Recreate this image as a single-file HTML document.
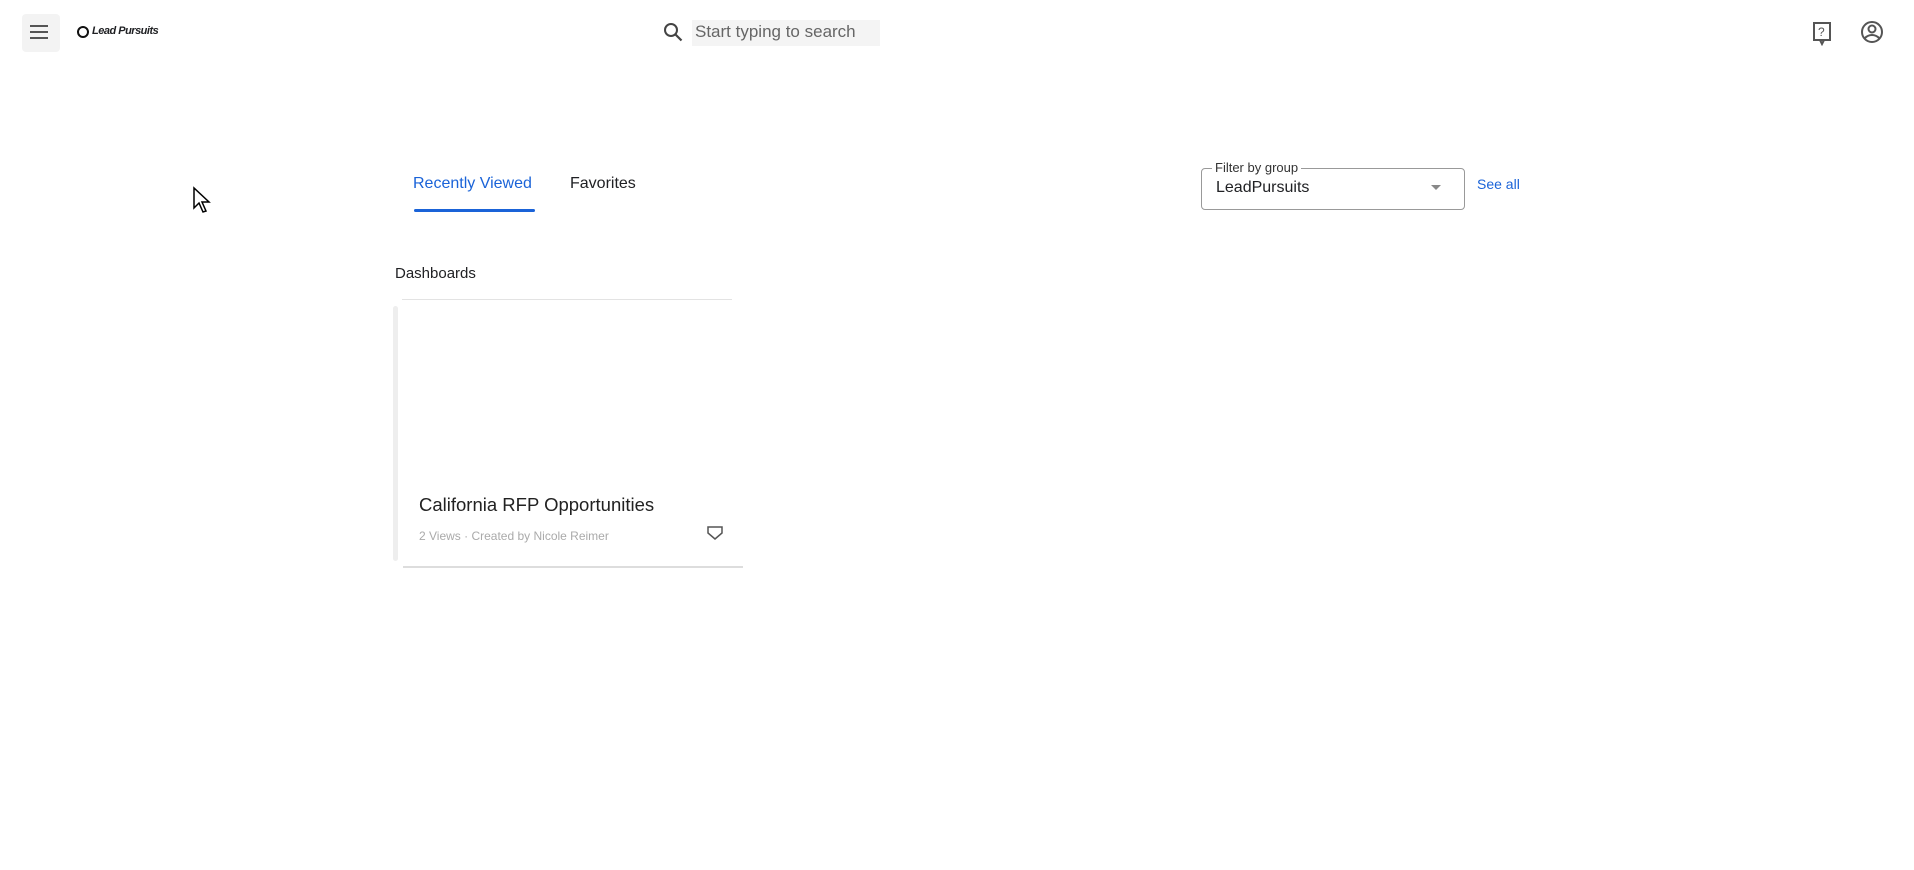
<!DOCTYPE html>
<html><head><meta charset="utf-8"><style>
body{margin:0;width:1914px;height:870px;background:#fff;font-family:"Liberation Sans",sans-serif;position:relative;overflow:hidden;color:#202124}
.a{position:absolute;white-space:nowrap}
</style></head><body>
<div class="a" style="left:22px;top:14px;width:38px;height:38px;background:#f3f3f3;border-radius:4px"></div>
<svg class="a" style="left:28px;top:22px" width="22" height="20"><path d="M2 4h18M2 10h18M2 16h18" stroke="#555" stroke-width="2"/></svg>
<svg class="a" style="left:76px;top:25px" width="14" height="14"><circle cx="7" cy="7" r="5" fill="none" stroke="#111" stroke-width="2"/></svg>
<div class="a" style="left:92px;top:25px;font-size:11px;font-weight:bold;font-style:italic;letter-spacing:-0.5px">Lead Pursuits</div>
<svg class="a" style="left:662px;top:21px" width="22" height="22"><circle cx="9" cy="9" r="6" fill="none" stroke="#444" stroke-width="2"/><path d="M13.5 13.5l6 6" stroke="#444" stroke-width="2.2"/></svg>
<div class="a" style="left:692px;top:20px;width:188px;height:26px;background:#f4f4f4"></div>
<div class="a" style="left:695px;top:22px;font-size:17px;color:#666">Start typing to search</div>
<svg class="a" style="left:1811px;top:20px" width="22" height="26"><rect x="3" y="3" width="16" height="17" fill="none" stroke="#555" stroke-width="2"/><path d="M9 20l2 4 2-4" fill="none" stroke="#555" stroke-width="2"/><text x="7" y="16" font-size="12" fill="#555" font-family="Liberation Sans">?</text></svg>
<svg class="a" style="left:1860px;top:20px" width="24" height="24"><circle cx="12" cy="12" r="10" fill="none" stroke="#555" stroke-width="2"/><circle cx="12" cy="9" r="3.5" fill="none" stroke="#555" stroke-width="2"/><path d="M5 18c4-4 10-4 14 0" fill="none" stroke="#555" stroke-width="2"/></svg>
<svg class="a" style="left:192px;top:186px" width="24" height="30"><path d="M2 2v20l5-5 4 9 3-1-4-9h7z" fill="#fff" stroke="#000" stroke-width="1.5"/></svg>
<div class="a" style="left:413px;top:175px;font-size:16px;color:#1a63d8">Recently Viewed</div>
<div class="a" style="left:570px;top:175px;font-size:16px;color:#202124">Favorites</div>
<div class="a" style="left:414px;top:209px;width:121px;height:3px;background:#1a63d8;border-radius:2px"></div>
<div class="a" style="left:1201px;top:168px;width:262px;height:40px;border:1px solid #999;border-radius:4px"></div>
<div class="a" style="left:1212px;top:160px;background:#fff;padding:0 3px;font-size:13px;color:#333">Filter by group</div>
<div class="a" style="left:1216px;top:179px;font-size:16px">LeadPursuits</div>
<svg class="a" style="left:1430px;top:184px" width="12" height="8"><path d="M1 1h10l-5 5z" fill="#888"/></svg>
<div class="a" style="left:1477px;top:176px;font-size:14px;color:#1a63d8">See all</div>
<div class="a" style="left:395px;top:265px;font-size:15px">Dashboards</div>
<div class="a" style="left:402px;top:299px;width:330px;height:1px;background:#e3e3e3"></div>
<div class="a" style="left:393px;top:306px;width:5px;height:255px;background:#eee;border-radius:3px"></div>
<div class="a" style="left:403px;top:566px;width:340px;height:2px;background:#ddd"></div>
<div class="a" style="left:419px;top:494px;font-size:18.5px;color:#222">California RFP Opportunities</div>
<div class="a" style="left:419px;top:529px;font-size:12px;color:#aaa">2 Views · Created by Nicole Reimer</div>
<svg class="a" style="left:706px;top:525px" width="18" height="16"><path d="M2 2h14v6l-7 6-7-6z" fill="none" stroke="#555" stroke-width="1.5"/></svg>
</body></html>
